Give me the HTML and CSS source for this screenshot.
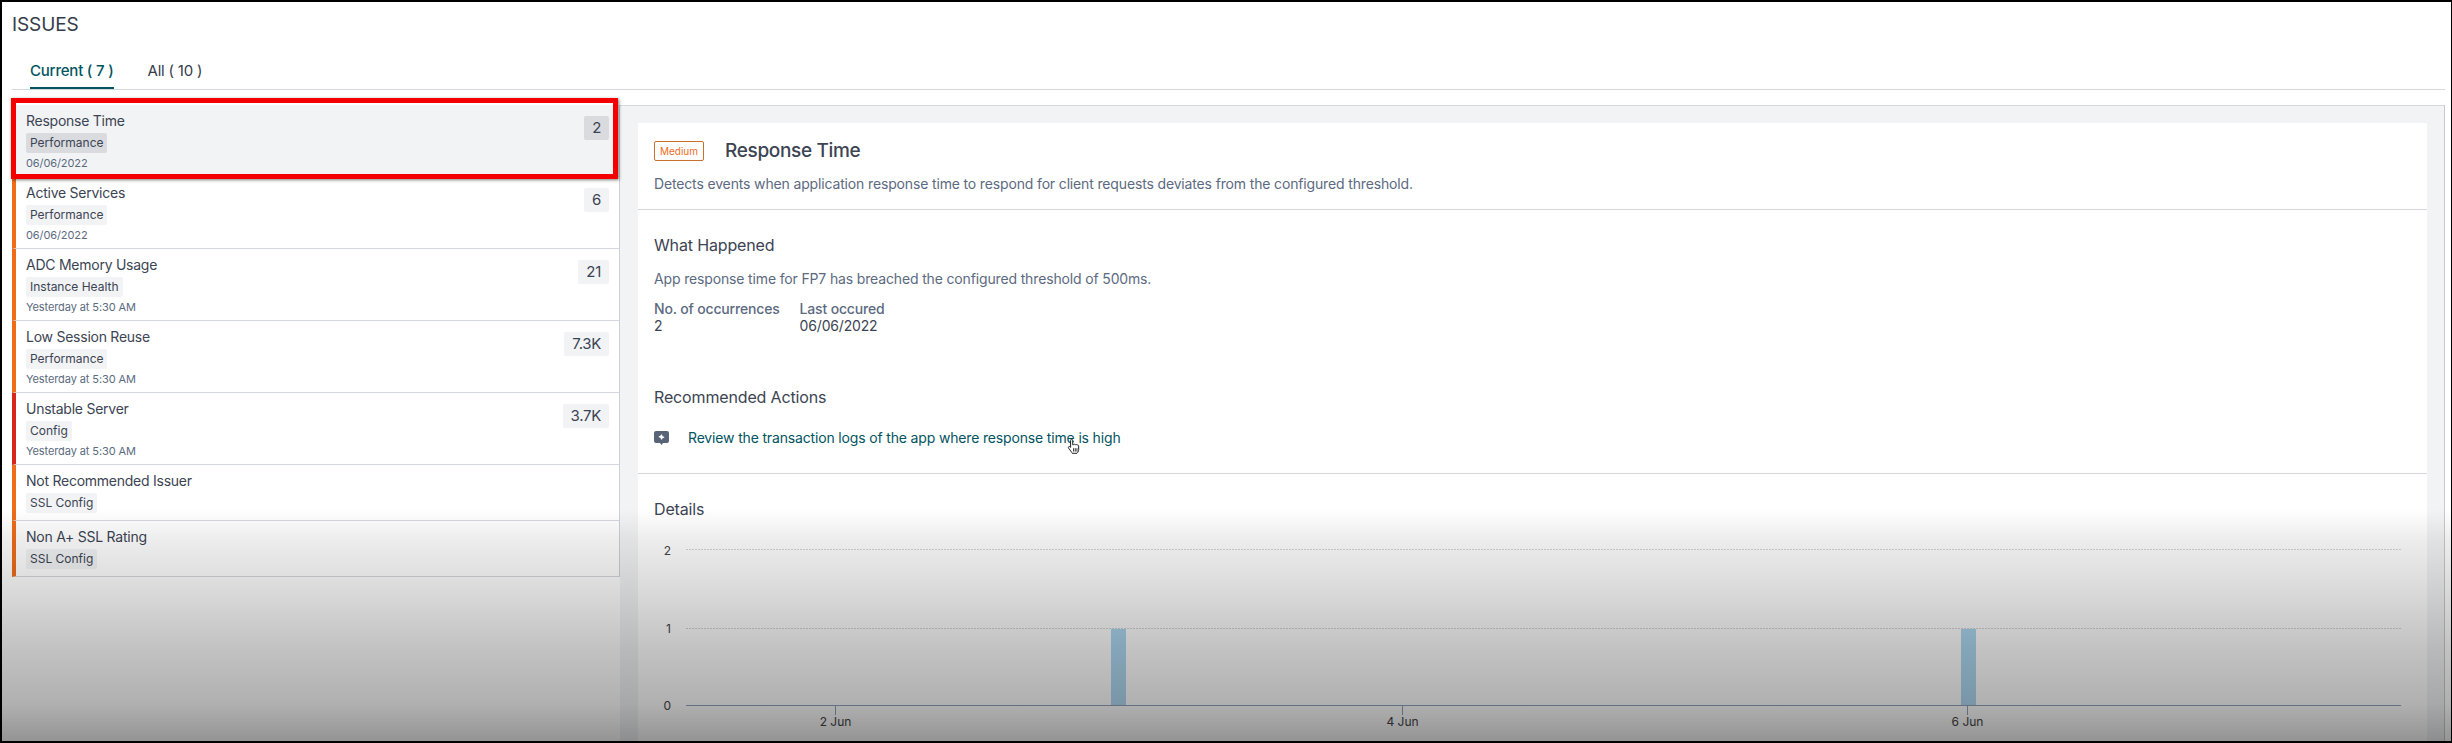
FILE: index.html
```html
<!DOCTYPE html>
<html lang="en">
<head>
<meta charset="utf-8">
<title>Issues</title>
<link rel="stylesheet" href="styles.css">
</head>
<body>
<div class="frame">
  <h1 class="page-title">ISSUES</h1>
  <nav class="tabs">
    <a class="tab tab-active">Current ( 7 )</a>
    <a class="tab">All ( 10 )</a>
  </nav>
  <div class="content">
    <ul class="issue-list">
      <li class="issue issue-selected">
        <div class="issue-body"><div class="issue-name">Response Time</div><span class="tag">Performance</span><div class="issue-time">06/06/2022</div></div>
        <span class="count">2</span>
      </li>
      <li class="issue">
        <div class="issue-body"><div class="issue-name">Active Services</div><span class="tag">Performance</span><div class="issue-time">06/06/2022</div></div>
        <span class="count">6</span>
      </li>
      <li class="issue">
        <div class="issue-body"><div class="issue-name">ADC Memory Usage</div><span class="tag">Instance Health</span><div class="issue-time">Yesterday at 5:30 AM</div></div>
        <span class="count">21</span>
      </li>
      <li class="issue">
        <div class="issue-body"><div class="issue-name">Low Session Reuse</div><span class="tag">Performance</span><div class="issue-time">Yesterday at 5:30 AM</div></div>
        <span class="count">7.3K</span>
      </li>
      <li class="issue issue-high">
        <div class="issue-body"><div class="issue-name">Unstable Server</div><span class="tag">Config</span><div class="issue-time">Yesterday at 5:30 AM</div></div>
        <span class="count">3.7K</span>
      </li>
      <li class="issue issue-short">
        <div class="issue-body"><div class="issue-name">Not Recommended Issuer</div><span class="tag">SSL Config</span></div>
      </li>
      <li class="issue issue-short">
        <div class="issue-body"><div class="issue-name">Non A+ SSL Rating</div><span class="tag">SSL Config</span></div>
      </li>
    </ul>
    <section class="detail">
      <div class="card">
        <header class="card-head">
          <div class="head-row"><span class="severity">Medium</span><h2 class="detail-title">Response Time</h2></div>
          <p class="desc">Detects events when application response time to respond for client requests deviates from the configured threshold.</p>
        </header>
        <section class="block block-what">
          <h3 class="block-title">What Happened</h3>
          <p class="desc what-text">App response time for FP7 has breached the configured threshold of 500ms.</p>
          <div class="facts">
            <div><div class="fact-label">No. of occurrences</div><div class="fact-value">2</div></div>
            <div><div class="fact-label">Last occured</div><div class="fact-value">06/06/2022</div></div>
          </div>
        </section>
        <section class="block block-actions">
          <h3 class="block-title">Recommended Actions</h3>
          <div class="action">
            <svg class="action-icon" viewBox="0 0 15 14" width="15" height="14"><path fill="#5a6478" d="M2 0h11a2 2 0 0 1 2 2v8a2 2 0 0 1-2 2H9l-1.500 2L6 12H2a2 2 0 0 1-2-2V2a2 2 0 0 1 2-2z"/><path fill="#fff" d="M7 3.500h1l.5 1.700 1.700.5v1l-1.700.5L8 8.500H7l-.5-1.700-1.700-.5v-1l1.700-.5z"/></svg>
            <a class="action-link">Review the transaction logs of the app where response time is high<svg class="hand" viewBox="0 0 16 20" width="14" height="17"><path fill="#fff" stroke="#111" stroke-width="1.100" stroke-linejoin="round" d="M5 1.500c1 0 1.500.6 1.500 1.600V8l1-.2c.4-.6 1.700-.6 2.100.1.600-.5 1.700-.3 2 .4.700-.3 1.900 0 1.900 1.200v4c0 2-1 3.500-2 4.500H6c-1-1.500-2-3-4.300-6-.6-1-.3-1.800.5-2 .6-.1 1.200.3 1.800 1V3.100C4 2.100 4.300 1.500 5 1.500z"/><path stroke="#111" stroke-width="1" d="M7.500 12v4M9.500 12v4M11.500 12v4"/></svg></a>
          </div>
        </section>
        <section class="block block-details">
          <h3 class="block-title">Details</h3>
          <svg class="chart" viewBox="0 0 1789 200" width="1789" height="200">
            <line class="grid" x1="48" y1="12.500" x2="1763" y2="12.500"/>
            <line class="grid" x1="48" y1="91.500" x2="1763" y2="91.500"/>
            <rect class="bar" x="473" y="92" width="15" height="76"/>
            <rect class="bar" x="1323" y="92" width="15" height="76"/>
            <line class="axis" x1="48" y1="168.500" x2="1763" y2="168.500"/>
            <line class="tick" x1="197.500" y1="168" x2="197.500" y2="178"/>
            <line class="tick" x1="764.500" y1="168" x2="764.500" y2="178"/>
            <line class="tick" x1="1329.500" y1="168" x2="1329.500" y2="178"/>
            <text class="y-label" x="33" y="18">2</text>
            <text class="y-label" x="33" y="96">1</text>
            <text class="y-label" x="33" y="173">0</text>
            <text class="x-label" x="197.500" y="189">2 Jun</text>
            <text class="x-label" x="764.500" y="189">4 Jun</text>
            <text class="x-label" x="1329.500" y="189">6 Jun</text>
          </svg>
        </section>
      </div>
    </section>
  </div>
  <div class="highlight"></div>
  <div class="fade"></div>
</div>
</body>
</html>
```
FILE: styles.css
```css
* { box-sizing: border-box; }
html, body { margin: 0; height: 100%; }
body { background: #000; font-family: Inter, "Liberation Sans", sans-serif; color: #343c4a; }
.frame { position: relative; height: 739px; margin: 2px 1px 2px 2px; background: #fff; overflow: hidden; padding: 0 6px 0 10px; }
.page-title { margin: 0; height: 50px; padding-top: 12px; font-size: 19px; line-height: 22px; font-weight: 400; letter-spacing: -.1px; }
.tabs { display: flex; gap: 34px; height: 38px; padding-left: 18px; border-bottom: 1px solid #d5d8dc; }
.tab { height: 37px; padding-top: 10px; font-size: 15px; line-height: 18px; letter-spacing: -.2px; }
.tab-active { color: #02545f; border-bottom: 2px solid #02545f; font-weight: 500; }
.content { display: flex; align-items: flex-start; height: 651px; padding-top: 15px; }
.issue-list { list-style: none; margin: 0; padding: 0; width: 608px; flex: none; border-right: 1px solid #cdd0d4; }
.issue { display: flex; justify-content: space-between; height: 72px; padding: 7px 10px 0 10px; border-left: 4px solid #ee6c1a; border-bottom: 1px solid #d5d8dc; }
.issue-high { border-left-color: #d7271d; }
.issue-short { height: 56px; }
.issue-selected { background: #f2f3f5; }
.issue-name { font-size: 14px; line-height: 18px; letter-spacing: -.25px; color: #3c4453; }
.tag { display: inline-block; height: 20px; margin-top: 3px; padding: 0 4px; font-size: 12px; line-height: 20px; border-radius: 2px; background: #f2f3f5; color: #3c4453; }
.issue-selected .tag { background: #d9dbdf; }
.issue-time { margin-top: 3px; font-size: 11px; line-height: 14px; letter-spacing: -.1px; color: #5c6a7f; }
.count { align-self: flex-start; margin-top: 4px; height: 24px; padding: 0 8px; font-size: 15px; line-height: 24px; letter-spacing: -.3px; background: #f2f3f5; border-radius: 2px; color: #3c4453; }
.issue-selected .count { background: #d9dbdf; }
.detail { flex: 1; min-width: 0; align-self: stretch; background: #f2f3f5; border-top: 1px solid #d5d8dc; border-right: 1px solid #c6c9cd; padding: 17px 17px 0 18px; }
.card { background: #fff; height: 100%; }
.card-head { height: 87px; padding: 18px 16px 0 16px; border-bottom: 1px solid #d5d8dc; }
.head-row { display: flex; align-items: center; gap: 21px; height: 20px; }
.severity { width: 50px; height: 20px; font-size: 10px; line-height: 18px; text-align: center; color: #ee6c1a; border: 1px solid #c8702e; border-radius: 2px; }
.detail-title { margin: 0; font-size: 19px; line-height: 24px; font-weight: 500; letter-spacing: -.35px; color: #3c4453; }
.desc { margin: 14px 0 0; font-size: 14px; line-height: 18px; letter-spacing: -.15px; color: #5c6a7f; }
.block { padding: 0 16px; border-bottom: 1px solid #d5d8dc; }
.block-title { margin: 0; font-size: 16px; line-height: 20px; font-weight: 400; letter-spacing: -.15px; color: #3c4453; }
.block-what { padding-top: 25px; height: 139px; border-bottom: 0; }
.what-text { margin-top: 15px; }
.facts { display: flex; gap: 20px; margin-top: 12px; font-size: 14px; line-height: 17px; letter-spacing: -.17px; }
.fact-label { font-weight: 500; color: #5c6a7f; }
.fact-value { color: #3c4453; }
.block-actions { height: 125px; padding-top: 38px; }
.action { display: flex; align-items: center; gap: 19px; margin-top: 22px; }
.action-link { position: relative; font-size: 14px; line-height: 18px; letter-spacing: -.16px; color: #02545f; }
.hand { position: absolute; left: 379px; top: 9px; }
.block-details { padding: 25px 0 0 0; border-bottom: 0; }
.block-details .block-title { margin-left: 16px; }
.chart { display: block; margin-top: 18px; }
.grid { stroke: #d2d4d7; stroke-width: 1; stroke-dasharray: 2 1; }
.axis { stroke: #8fa3bd; stroke-width: 1; }
.tick { stroke: #8fa3bd; stroke-width: 1; }
.bar { fill: #aed9f2; }
.y-label { font-size: 12px; fill: #444; text-anchor: end; }
.x-label { font-size: 12px; fill: #444; text-anchor: middle; }
.highlight { position: absolute; left: 9px; top: 96px; width: 607px; height: 81px; border: 5px solid #f40000; box-shadow: 1px 1px 3px rgba(0,0,0,.5); }
.fade { position: absolute; left: 0; right: 0; bottom: 0; height: 232px; pointer-events: none; background: linear-gradient(to bottom, rgba(0,0,0,0) 0, rgba(0,0,0,.07) 30px, rgba(0,0,0,.13) 70px, rgba(0,0,0,.24) 140px, rgba(0,0,0,.31) 195px, rgba(0,0,0,.42) 232px); }
```
